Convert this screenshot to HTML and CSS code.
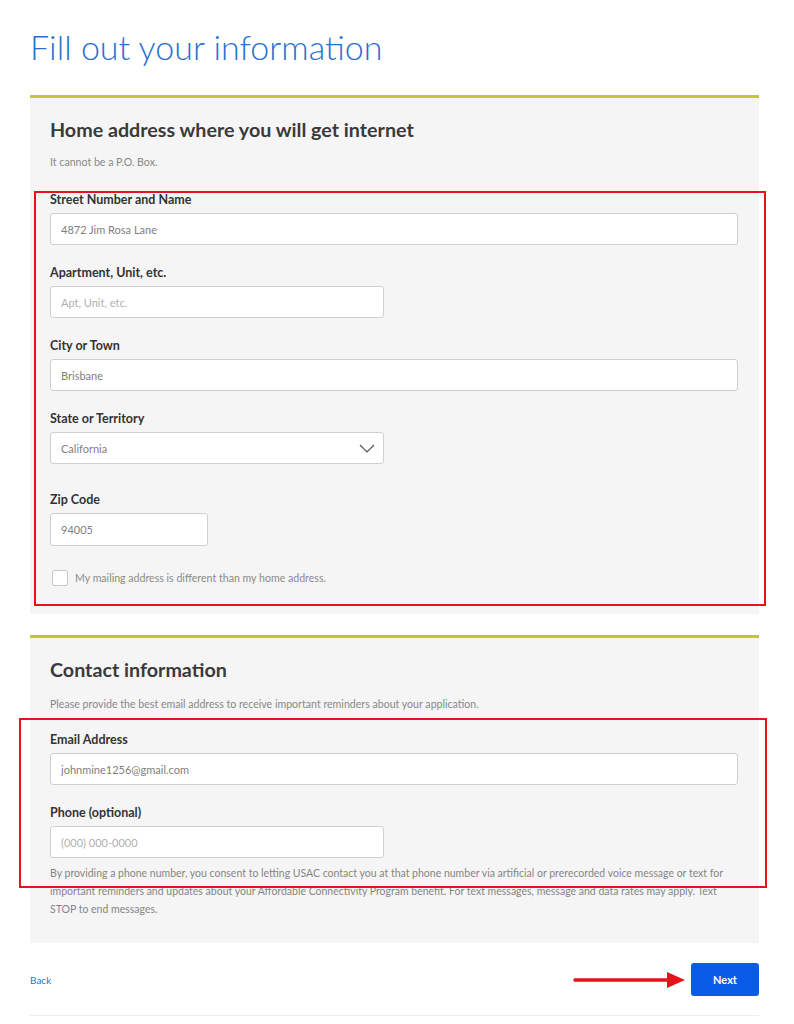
FILE: index.html
```html
<!DOCTYPE html>
<html lang="en">
<head>
    <meta charset="UTF-8">
    <meta name="viewport" content="width=device-width, initial-scale=1.0">
    <title>Fill out your information</title>
    <link rel="stylesheet" href="styles.css">
</head>
<body>
    <main class="page">
        <h1 class="page-title">Fill out your information</h1>

        <section class="card">
            <h2 class="card-title">Home address where you will get internet</h2>
            <p class="hint">It cannot be a P.O. Box.</p>

            <div class="field">
                <label class="label" for="street">Street Number and Name</label>
                <input class="input" id="street" type="text" value="4872 Jim Rosa Lane">
            </div>

            <div class="field">
                <label class="label" for="apt">Apartment, Unit, etc.</label>
                <input class="input input-half" id="apt" type="text" placeholder="Apt, Unit, etc.">
            </div>

            <div class="field">
                <label class="label" for="city">City or Town</label>
                <input class="input" id="city" type="text" value="Brisbane">
            </div>

            <div class="field field-select">
                <label class="label" for="state">State or Territory</label>
                <div class="select-wrap">
                    <select class="input select" id="state">
                        <option>California</option>
                    </select>
                    <svg class="chevron" width="16" height="9" viewBox="0 0 16 9">
                        <path d="M1 1 L8 8 L15 1" fill="none" stroke="#555" stroke-width="1.2"/>
                    </svg>
                </div>
            </div>

            <div class="field field-zip">
                <label class="label" for="zip">Zip Code</label>
                <input class="input input-zip" id="zip" type="text" value="94005">
            </div>

            <label class="check">
                <span class="check-box"></span>
                <span>My mailing address is different than my home address.</span>
            </label>
        </section>

        <section class="card card-contact">
            <h2 class="card-title">Contact information</h2>
            <p class="hint">Please provide the best email address to receive important reminders about your application.</p>

            <div class="field">
                <label class="label" for="email">Email Address</label>
                <input class="input" id="email" type="text" value="johnmine1256@gmail.com">
            </div>

            <div class="field">
                <label class="label" for="phone">Phone (optional)</label>
                <input class="input input-half" id="phone" type="text" placeholder="(000) 000-0000">
                <p class="consent">By providing a phone number, you consent to letting USAC contact you at that phone number via artificial or prerecorded voice message or text for important reminders and updates about your Affordable Connectivity Program benefit. For text messages, message and data rates may apply. Text STOP to end messages.</p>
            </div>
        </section>

        <div class="actions">
            <a class="back-link" href="#">Back</a>
            <button class="btn-next" type="button">Next</button>
        </div>
        <hr class="rule">

        <!-- annotations drawn over the screenshot -->
        <div class="mark mark-address"></div>
        <div class="mark mark-contact"></div>
        <svg class="arrow" width="114" height="20" viewBox="0 0 114 20">
            <line x1="2" y1="10" x2="96" y2="10" stroke="#e8121a" stroke-width="3.5" stroke-linecap="round"/>
            <polygon points="94,2 112,10 94,18" fill="#e8121a"/>
        </svg>
    </main>
</body>
</html>
```

FILE: styles.css
```css
* {
    margin: 0;
    padding: 0;
    box-sizing: border-box;
}

body {
    font-family: Lato, 'Noto Sans', sans-serif;
    background: #fff;
    color: #333;
}

.page {
    position: relative;
    width: 794px;
    padding: 26px 35px 0 30px;
}

.page-title {
    font-size: 34px;
    font-weight: 300;
    line-height: 42px;
    color: #2a6fd0;
    margin-bottom: 27px;
}

.card {
    background: #f5f5f5;
    border-top: 3px solid #c3c92b;
    padding: 19px 21px 28px 20px;
}

.card-contact {
    margin-top: 21px;
    padding-top: 19px;
    padding-bottom: 25px;
}

.card-title {
    font-size: 19.7px;
    font-weight: 700;
    line-height: 26px;
    color: #3a3a3a;
}

.hint {
    font-size: 10.6px;
    line-height: 16px;
    color: #888;
    margin-top: 11px;
    margin-bottom: 22px;
}

.card-contact .hint {
    margin-top: 13px;
    margin-bottom: 20px;
}

.field {
    display: flex;
    flex-direction: column;
    align-items: flex-start;
    margin-bottom: 20px;
}

.field-select {
    margin-bottom: 28px;
}

.field-zip {
    margin-bottom: 24px;
}

.label {
    font-size: 12.5px;
    font-weight: 700;
    line-height: 16px;
    color: #333;
    margin-bottom: 5px;
}

.input {
    width: 100%;
    height: 32px;
    background: #fff;
    border: 1px solid #cfcfcf;
    border-radius: 3px;
    padding: 0 10px;
    font-family: Lato, 'Noto Sans', sans-serif;
    font-size: 11px;
    color: #808080;
    outline: none;
}

.input::placeholder {
    color: #b0b0b0;
}

.input-half {
    width: 334px;
}

.input-zip {
    width: 158px;
    height: 33px;
}

.select-wrap {
    position: relative;
    width: 334px;
}

.select {
    appearance: none;
    -webkit-appearance: none;
}

.chevron {
    position: absolute;
    right: 9px;
    top: 12px;
}

.check {
    display: flex;
    align-items: center;
    gap: 7px;
    font-size: 10.6px;
    color: #8a8a8a;
    padding-left: 2px;
}

.check-box {
    width: 16px;
    height: 16px;
    background: #fff;
    border: 1px solid #c9c9c9;
    border-radius: 2px;
}

.consent {
    font-size: 10.5px;
    line-height: 18px;
    color: #858585;
    margin-top: 6px;
}

.card-contact .field:last-child {
    margin-bottom: 0;
}

.actions {
    display: flex;
    justify-content: space-between;
    align-items: center;
    margin-top: 20px;
}

.back-link {
    font-size: 10px;
    color: #2a6fd0;
    text-decoration: none;
}

.btn-next {
    width: 68px;
    height: 33px;
    background: #0a5ce8;
    border: none;
    border-radius: 3px;
    color: #fff;
    font-family: Lato, 'Noto Sans', sans-serif;
    font-size: 11px;
    font-weight: 700;
}

.rule {
    border: none;
    border-top: 1px solid #eee;
    margin-top: 19px;
}

.mark {
    position: absolute;
    border: 2px solid #e8121a;
}

.mark-address {
    left: 34px;
    top: 191px;
    width: 732px;
    height: 415px;
}

.mark-contact {
    left: 19px;
    top: 718px;
    width: 748px;
    height: 170px;
}

.arrow {
    position: absolute;
    left: 573px;
    top: 970px;
}
```
